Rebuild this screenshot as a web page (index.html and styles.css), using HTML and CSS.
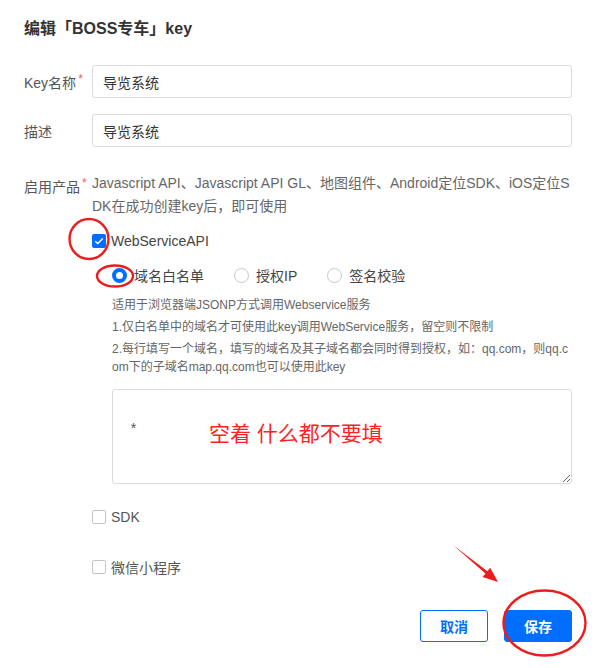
FILE: index.html
```html
<!DOCTYPE html>
<html lang="zh-CN">
<head>
    <meta charset="UTF-8">
    <meta name="viewport" content="width=device-width, initial-scale=1.0">
    <title>编辑key</title>
    <link rel="stylesheet" href="styles.css">
</head>
<body>
    <div class="page">
        <h2 class="title">编辑「BOSS专车」key</h2>

        <div class="form-item">
            <label class="form-label">Key名称<span class="req">*</span></label>
            <input type="text" class="input" value="导览系统">
        </div>

        <div class="form-item">
            <label class="form-label">描述</label>
            <input type="text" class="input" value="导览系统">
        </div>

        <div class="form-item product">
            <label class="form-label">启用产品<span class="req">*</span></label>
            <div class="form-content">
                <p class="product-desc">Javascript API、Javascript API GL、地图组件、Android定位SDK、iOS定位SDK在成功创建key后，即可使用</p>

                <label class="check check-first">
                    <span class="box checked">
                        <svg width="10" height="8" viewBox="0 0 10 8"><path d="M1.2 4.2 L3.8 6.6 L8.8 1.4" fill="none" stroke="#fff" stroke-width="1.4"/></svg>
                    </span>
                    WebServiceAPI
                </label>

                <div class="sub">
                    <div class="radios">
                        <label class="radio"><span class="dot on"></span>域名白名单</label>
                        <label class="radio"><span class="dot"></span>授权IP</label>
                        <label class="radio"><span class="dot"></span>签名校验</label>
                    </div>
                    <div class="help">
                        <p>适用于浏览器端JSONP方式调用Webservice服务</p>
                        <p>1.仅白名单中的域名才可使用此key调用WebService服务，留空则不限制</p>
                        <p>2.每行填写一个域名，填写的域名及其子域名都会同时得到授权，如：qq.com，则qq.com下的子域名map.qq.com也可以使用此key</p>
                    </div>
                    <textarea class="textarea">

  *</textarea>
                </div>

                <label class="check check-sdk"><span class="box"></span>SDK</label>
                <label class="check check-mini"><span class="box"></span>微信小程序</label>
            </div>
        </div>

        <div class="actions">
            <button type="button" class="btn btn-cancel">取消</button>
            <button type="button" class="btn btn-save">保存</button>
        </div>

        <!-- 标注 -->
        <div class="note">空着 什么都不要填</div>
        <svg class="marks" width="602" height="668" viewBox="0 0 602 668">
            <ellipse cx="89" cy="239" rx="19.5" ry="20" fill="none" stroke="#ee1c1c" stroke-width="2.4"/>
            <ellipse cx="115" cy="276" rx="18" ry="10.5" fill="none" stroke="#ee1c1c" stroke-width="2.4"/>
            <ellipse cx="544.5" cy="623" rx="41" ry="32.5" fill="none" stroke="#ee1c1c" stroke-width="2.4"/>
            <polygon points="453,545 487.4,571.2 490.2,567.7 498,582 482.6,577 485.4,573.6" fill="#ee1c1c"/>
        </svg>
    </div>
</body>
</html>
```

FILE: styles.css
```css
body {
    margin: 0;
    padding: 0;
    background-color: #fff;
    font-family: "Liberation Sans", "Noto Sans CJK SC", sans-serif;
    color: #333;
}

.page {
    position: relative;
    width: 602px;
    height: 668px;
    box-sizing: border-box;
    padding: 17px 30px 0 24px;
}

.title {
    margin: 0 0 24px;
    font-size: 16px;
    line-height: 24px;
    font-weight: bold;
    color: #333;
}

.form-item {
    display: flex;
    align-items: center;
    margin-bottom: 16px;
}

.form-label {
    flex: none;
    width: 68px;
    font-size: 14px;
    color: #555;
}

.req {
    color: #f15b5b;
    font-size: 12px;
    vertical-align: 5px;
    margin-left: 2px;
}

.input {
    flex: 1;
    height: 33px;
    box-sizing: border-box;
    padding: 0 10px;
    border: 1px solid #dcdcdc;
    border-radius: 3px;
    font-family: inherit;
    font-size: 14px;
    color: #333;
}

.product {
    align-items: flex-start;
    margin-top: 25px;
}

.product .form-label {
    line-height: 23px;
}

.form-content {
    flex: 1;
    min-width: 0;
}

.product-desc {
    margin: 0;
    font-size: 14px;
    line-height: 23px;
    color: #666;
    word-break: break-all;
}

.check {
    display: flex;
    align-items: center;
    height: 22px;
    font-size: 14px;
    color: #555;
}

.check-first {
    margin-top: 12px;
    color: #444;
}

.check-sdk {
    margin-top: 22px;
}

.check-mini {
    margin-top: 28px;
}

.box {
    width: 12px;
    height: 12px;
    border: 1px solid #c5c5c5;
    border-radius: 2px;
    margin-right: 5px;
    display: flex;
    align-items: center;
    justify-content: center;
    background: #fff;
}

.box.checked {
    width: 14px;
    height: 14px;
    border: none;
    background-color: #006eff;
}

.sub {
    padding-left: 20px;
}

.radios {
    display: flex;
    gap: 30px;
    margin-top: 12px;
    height: 22px;
}

.radio {
    display: flex;
    align-items: center;
    font-size: 14px;
    color: #444;
}

.dot {
    width: 13px;
    height: 13px;
    border: 1px solid #c8c8c8;
    border-radius: 50%;
    margin-right: 7px;
    box-sizing: content-box;
}

.dot.on {
    width: 7px;
    height: 7px;
    border: 4px solid #006eff;
    background: #fff;
}

.help {
    margin-top: 10px;
    font-size: 12px;
    line-height: 18px;
    color: #666;
    word-break: break-all;
}

.help p {
    margin: 0 0 4px;
}

.help p:last-child {
    margin-bottom: 0;
}

.textarea {
    display: block;
    width: 100%;
    height: 95px;
    box-sizing: border-box;
    margin-top: 13px;
    padding: 8px 10px;
    border: 1px solid #dcdcdc;
    border-radius: 3px;
    font-family: inherit;
    font-size: 14px;
    line-height: 20px;
    color: #555;
}

.actions {
    display: flex;
    justify-content: flex-end;
    gap: 16px;
    margin-top: 32px;
}

.btn {
    width: 68px;
    height: 32px;
    border-radius: 3px;
    font-family: inherit;
    font-size: 14px;
    font-weight: bold;
    cursor: pointer;
}

.btn-cancel {
    background-color: #fff;
    border: 1px solid #006eff;
    color: #006eff;
}

.btn-save {
    background-color: #006eff;
    border: 1px solid #006eff;
    color: #fff;
}

.note {
    position: absolute;
    left: 209px;
    top: 420px;
    font-size: 21px;
    line-height: 28px;
    color: #ff2222;
}

.marks {
    position: absolute;
    left: 0;
    top: 0;
    pointer-events: none;
}
```
